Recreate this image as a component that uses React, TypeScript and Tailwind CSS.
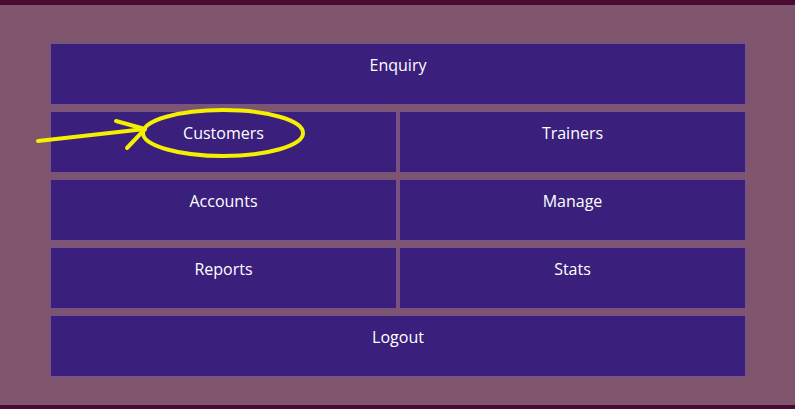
import { FC } from 'react';

const Tile: FC<{ label: string; wide?: boolean }> = ({ label, wide }) => (
    <button
        type="button"
        className={`${wide ? 'col-span-2' : ''} flex h-[60px] items-start justify-center bg-[#3a1f7c] pt-[11px] text-center text-[16px] leading-[20px] text-white shadow-[0_0_2px_1px_rgba(110,80,160,0.7)]`}
    >
        {label}
    </button>
);

const Annotation: FC = () => (
    <svg className="pointer-events-none absolute left-0 top-0" width="795" height="409" viewBox="0 0 795 409">
        <g fill="none" stroke="#f5ef00" strokeWidth="4" strokeLinecap="round" strokeLinejoin="round">
            <ellipse cx="223" cy="133" rx="80" ry="23" />
            <path d="M38 141 L145 129" />
            <path d="M116 121 L145 129 L127 148" />
        </g>
    </svg>
);

export default function App() {
    return (
        <div
            className="relative flex h-[409px] w-[795px] flex-col bg-[#80566f]"
            style={{ fontFamily: '"Open Sans", "Noto Sans", sans-serif' }}
        >
            <div className="h-[5px] bg-[#4a0a34]" />
            <div className="flex-1 pl-[51px] pt-[39px]">
                <div className="grid w-[694px] grid-cols-2 gap-x-[4px] gap-y-[8px]">
                    <Tile label="Enquiry" wide />
                    <Tile label="Customers" />
                    <Tile label="Trainers" />
                    <Tile label="Accounts" />
                    <Tile label="Manage" />
                    <Tile label="Reports" />
                    <Tile label="Stats" />
                    <Tile label="Logout" wide />
                </div>
            </div>
            <div className="h-[4px] bg-[#4a0a34]" />
            <Annotation />
        </div>
    );
}
